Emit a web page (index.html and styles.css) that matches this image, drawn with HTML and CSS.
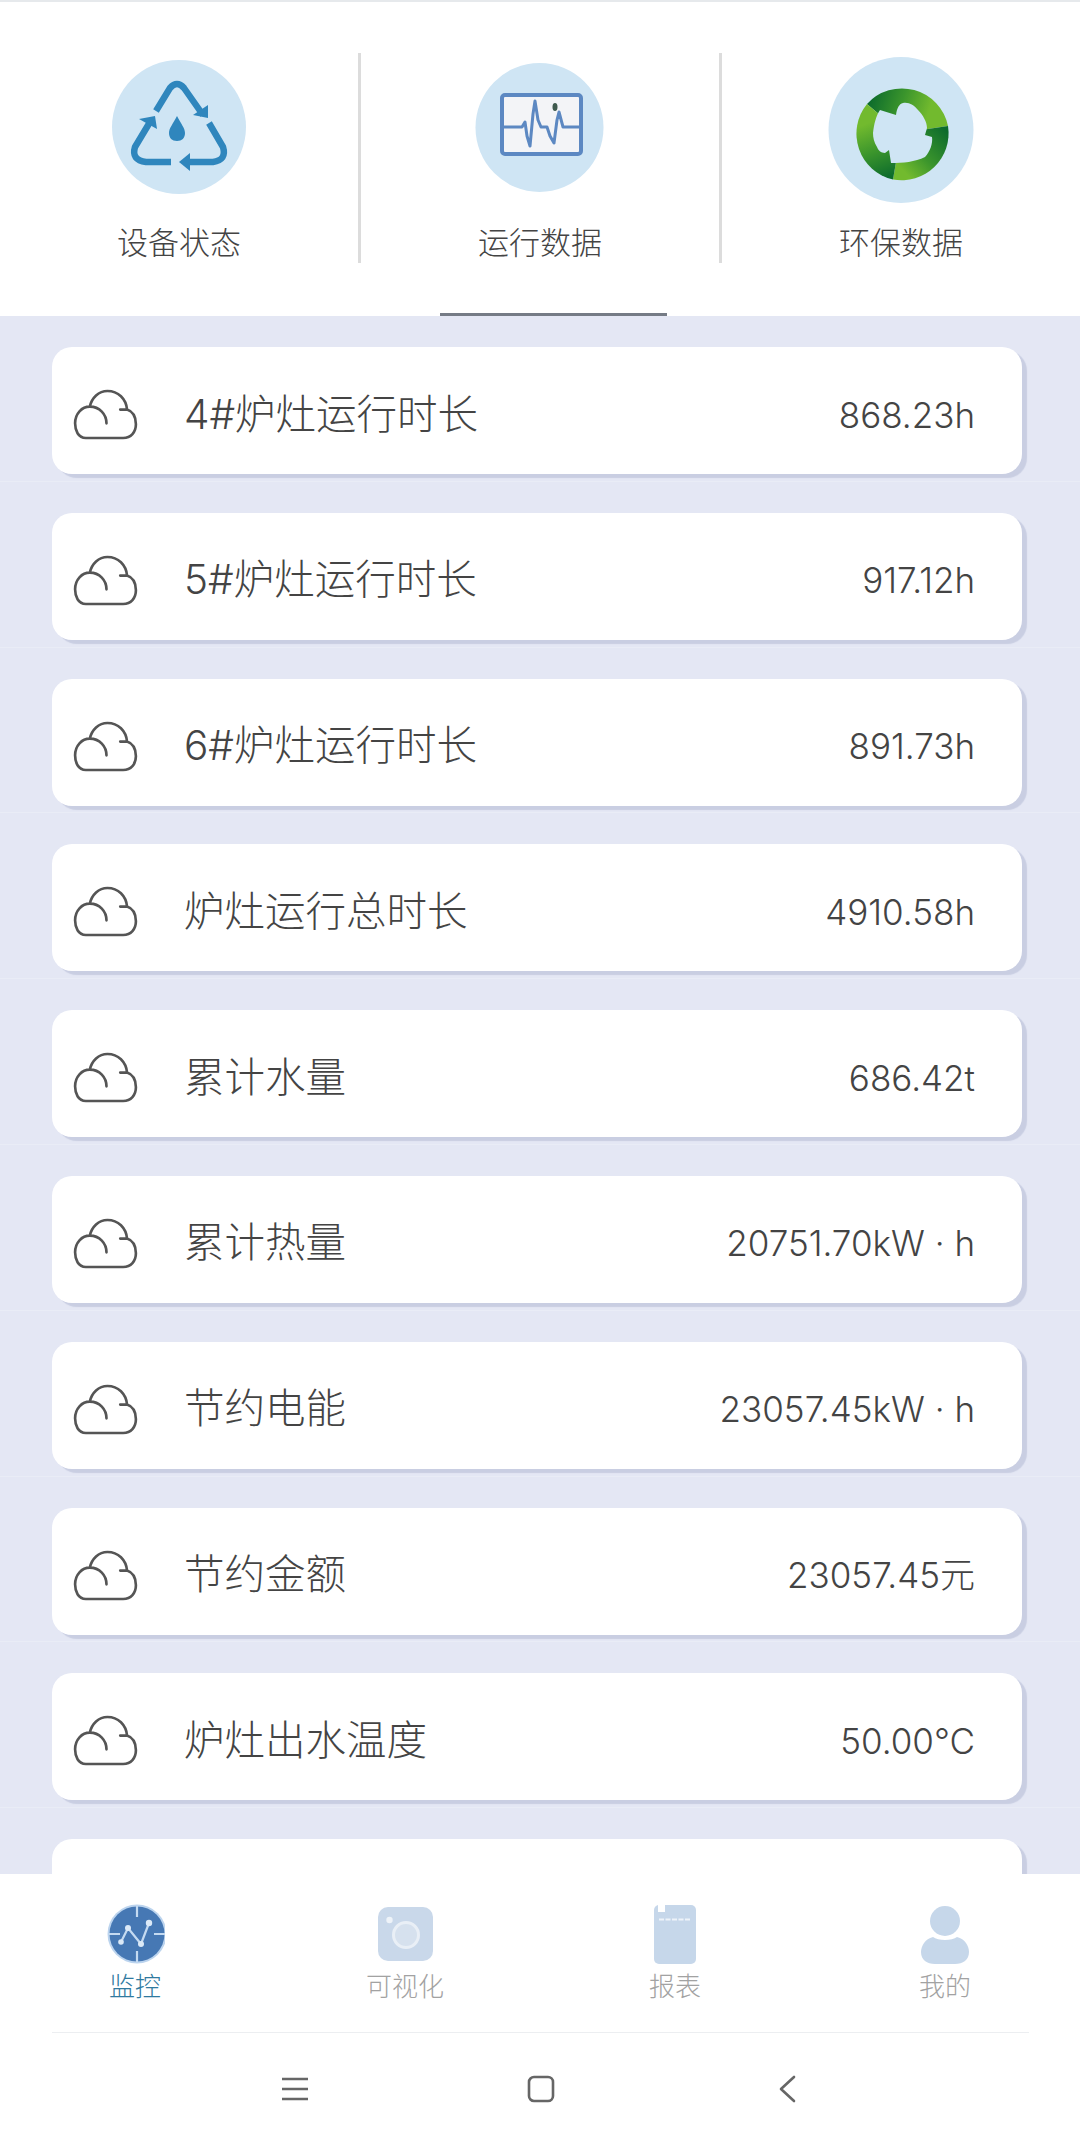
FILE: index.html
```html
<!DOCTYPE html>
<html lang="zh">
<head>
<meta charset="utf-8">
<title>运行数据</title>
<link rel="stylesheet" href="styles.css">
</head>
<body>
<svg class="defs" width="0" height="0" aria-hidden="true">
  <defs>
    <symbol id="cloud" viewBox="-1 -1 66 52">
      <path d="M12 49C4 49 1 41 1 34C1 24 8 17 16 17C26 17 33 25 33 34M16 17C18 8 25 1 34 1C45 1 53 9 54 20L47 20M54 20C60 22 63 28 63 35C63 43 58 49 50 49L12 49" fill="none" stroke="#555" stroke-width="2.7" stroke-linecap="round" stroke-linejoin="round"/>
    </symbol>
    <linearGradient id="gA" gradientUnits="userSpaceOnUse" x1="868" y1="100" x2="945" y2="125"><stop offset="0" stop-color="#0c6b2c"/><stop offset=".4" stop-color="#3b952c"/><stop offset=".75" stop-color="#72ba2e"/></linearGradient>
    <linearGradient id="gB" gradientUnits="userSpaceOnUse" x1="945" y1="130" x2="895" y2="178"><stop offset="0" stop-color="#0c6b2c"/><stop offset=".5" stop-color="#3b952c"/><stop offset=".85" stop-color="#72ba2e"/></linearGradient>
    <linearGradient id="gC" gradientUnits="userSpaceOnUse" x1="892" y1="176" x2="866" y2="108"><stop offset="0" stop-color="#0c6b2c"/><stop offset=".4" stop-color="#3b952c"/><stop offset=".8" stop-color="#72ba2e"/></linearGradient>
  </defs>
</svg>
<div class="app">
  <header class="tabs">
    <div class="tab">
      <svg class="tab-icon" viewBox="104 55 150 150">
        <ellipse cx="179" cy="127" rx="67" ry="67" fill="#cfe5f4"/>
        <g fill="none" stroke="#2f86bd" stroke-width="6.5" stroke-linejoin="round">
          <path d="M156 111L170 88Q177 80 184 88L203 115"/>
          <path d="M171 162L146 162Q131 160 135 147L150 122"/>
          <path d="M209 123L223 147Q227 160 213 162L186 162"/>
        </g>
        <g fill="#2f86bd">
          <path d="M193 115L208 105L208 118Z"/>
          <path d="M139 119L155 116L157 129Z"/>
          <path d="M179 162L190 153L190 171Z"/>
          <path d="M177 116C173 124 169 128 169 133C169 138 172 141 177 141C182 141 185 138 185 133C185 128 181 124 177 116Z"/>
        </g>
      </svg>
      <span class="tab-label">设备状态</span>
    </div>
    <div class="tab tab-active">
      <svg class="tab-icon" viewBox="464 55 150 150">
        <ellipse cx="538.5" cy="127.5" rx="64" ry="64.5" fill="#cfe5f4"/>
        <rect x="501" y="95" width="79" height="59" rx="3" fill="#f3f4f7" stroke="#5c88c2" stroke-width="4"/>
        <path d="M501 127L521 127L524 122L526 136L529 146L532 114L534 101L537 120L540 127L546 127L549 136L553 143L556 120L558 112L562 127L580 127" fill="none" stroke="#5c88c2" stroke-width="3" stroke-linejoin="round"/>
        <ellipse cx="554" cy="107" rx="2.5" ry="4" fill="#3f5a4e"/>
      </svg>
      <span class="tab-label">运行数据</span>
    </div>
    <div class="tab">
      <svg class="tab-icon" viewBox="825 55 150 150">
        <ellipse cx="900" cy="130" rx="72.500" ry="73" fill="#cfe5f4"/>
        <path d="M866 104A47 47 0 0 1 947 126L900 133Z" fill="url(#gA)"/>
        <path d="M947 126A47 47 0 0 1 892 179.500L900 133Z" fill="url(#gB)"/>
        <path d="M892 179.500A47 47 0 0 1 866 104L900 133Z" fill="url(#gC)"/>
        <path d="M895 115C896 108 898 104 902 103C908 102 913 105 917 110C922 115 926 122 926 128L924 135L931 137C932 143 929 152 924 157C914 162 902 163 890 163L888 150L884 153C880 153 877 150 876 147C873 142 872 138 872 133C873 124 875 116 879 110Z" fill="#cfe5f4"/>
      </svg>
      <span class="tab-label">环保数据</span>
    </div>
  </header>

  <main class="list">
    <div class="row"><div class="card"><svg class="cloud"><use href="#cloud"/></svg><span class="name">4#炉灶运行时长</span><span class="value">868.23h</span></div></div>
    <div class="row"><div class="card"><svg class="cloud"><use href="#cloud"/></svg><span class="name">5#炉灶运行时长</span><span class="value">917.12h</span></div></div>
    <div class="row"><div class="card"><svg class="cloud"><use href="#cloud"/></svg><span class="name">6#炉灶运行时长</span><span class="value">891.73h</span></div></div>
    <div class="row"><div class="card"><svg class="cloud"><use href="#cloud"/></svg><span class="name">炉灶运行总时长</span><span class="value">4910.58h</span></div></div>
    <div class="row"><div class="card"><svg class="cloud"><use href="#cloud"/></svg><span class="name">累计水量</span><span class="value">686.42t</span></div></div>
    <div class="row"><div class="card"><svg class="cloud"><use href="#cloud"/></svg><span class="name">累计热量</span><span class="value">20751.70kW · h</span></div></div>
    <div class="row"><div class="card"><svg class="cloud"><use href="#cloud"/></svg><span class="name">节约电能</span><span class="value">23057.45kW · h</span></div></div>
    <div class="row"><div class="card"><svg class="cloud"><use href="#cloud"/></svg><span class="name">节约金额</span><span class="value">23057.45元</span></div></div>
    <div class="row"><div class="card"><svg class="cloud"><use href="#cloud"/></svg><span class="name">炉灶出水温度</span><span class="value">50.00℃</span></div></div>
    <div class="row"><div class="card"></div></div>
  </main>

  <footer class="bottom">
    <nav class="nav">
      <div class="nav-item nav-active">
        <svg class="nav-icon" viewBox="105 1904 60 60">
          <circle cx="137" cy="1934" r="29.500" fill="#bcd4ee"/>
          <circle cx="137" cy="1934" r="27.500" fill="#4678b4"/>
          <g stroke="#c4daf1" stroke-width="2.200" fill="none">
            <path d="M137 1906V1917M137 1951V1962M109 1934H120M154 1934H165"/>
            <path d="M121 1942L128 1928L141 1944L149 1923"/>
          </g>
          <g fill="#dbe9f7">
            <circle cx="121" cy="1942" r="2.800"/>
            <circle cx="128" cy="1928" r="3"/>
            <circle cx="141" cy="1944" r="3"/>
            <circle cx="149" cy="1923" r="3.200"/>
          </g>
        </svg>
        <span class="nav-label">监控</span>
      </div>
      <div class="nav-item">
        <svg class="nav-icon" viewBox="375 1904 60 60">
          <rect x="378" y="1907" width="55" height="54" rx="10" fill="#c9d8ea"/>
          <circle cx="389.500" cy="1920" r="3.200" fill="#eef3f9"/>
          <circle cx="406" cy="1935" r="12.500" fill="#d6e1ee" stroke="#e9eff6" stroke-width="3"/>
        </svg>
        <span class="nav-label">可视化</span>
      </div>
      <div class="nav-item">
        <svg class="nav-icon" viewBox="645 1904 60 60">
          <rect x="654" y="1905" width="42" height="59" rx="5" fill="#c6d7ea"/>
          <rect x="658" y="1904" width="7" height="8" fill="#fff"/>
          <path d="M659 1919.500H691" stroke="#eef3f9" stroke-width="2" stroke-dasharray="5 1.500"/>
        </svg>
        <span class="nav-label">报表</span>
      </div>
      <div class="nav-item">
        <svg class="nav-icon" viewBox="915 1904 60 60">
          <circle cx="945" cy="1921" r="15" fill="#c6d7ea"/>
          <path d="M933 1937C938 1941 952 1941 957 1937C965 1939 969 1946 969 1952C969 1960 963 1964 955 1964H935C927 1964 921 1960 921 1952C921 1946 925 1939 933 1937Z" fill="#c6d7ea"/>
        </svg>
        <span class="nav-label">我的</span>
      </div>
    </nav>
    <div class="sysbar">
      <div class="sys-cell">
        <svg class="sys-icon" width="26" height="24" viewBox="0 0 26 24"><path d="M0 2H26M0 12H26M0 22H26" stroke="#666" stroke-width="2.600"/></svg>
      </div>
      <div class="sys-cell sys-shift">
        <svg class="sys-icon" width="28" height="28" viewBox="0 0 28 28"><rect x="2" y="2" width="24" height="24" rx="5" fill="none" stroke="#666" stroke-width="2.600"/></svg>
      </div>
      <div class="sys-cell sys-shift">
        <svg class="sys-icon" width="18" height="28" viewBox="0 0 18 28"><path d="M16 2L3 14L16 26" fill="none" stroke="#666" stroke-width="2.600" stroke-linecap="round" stroke-linejoin="round"/></svg>
      </div>
    </div>
  </footer>
</div>
</body>
</html>
```
FILE: styles.css
```css
* { box-sizing: border-box; }
html, body { margin: 0; padding: 0; background: #fff; }
body { font-family: Inter, "Noto Sans CJK SC", sans-serif; font-weight: 300; color: #444; }
.defs { position: absolute; }
.app { width: 1080px; height: 2146px; display: flex; flex-direction: column; overflow: hidden; }

.tabs { height: 316px; flex: none; display: flex; align-items: flex-start; background: #fff; border-top: 2px solid #e6e9ec; padding-top: 51px; }
.tab { flex: 1; height: 210px; display: flex; flex-direction: column; align-items: center; position: relative; padding-top: 2px; }
.tab + .tab { border-left: 3px solid #dcdcdc; }
.tab-icon { width: 150px; height: 150px; display: block; flex: none; }
.tab-label { margin-top: 18px; font-size: 31px; line-height: 40px; color: #444; }
.tab-active::after { content: ""; position: absolute; left: 79px; width: 227px; bottom: -53px; height: 3px; background: #757b85; }

.list { flex: 1; min-height: 0; overflow: hidden; background: #e4e7f4; }
.row { height: 165.8px; padding: 31px 58px 0 52px; border-bottom: 1px solid #e9ecf6; }
.card { height: 127px; background: #fff; border-radius: 20px; box-shadow: 5px 4px 1px #c9cee2; display: flex; align-items: center; padding: 8px 47px 0 21px; }
.cloud { width: 65px; height: 51px; flex: none; margin-right: 46px; }
.name { font-size: 40.5px; line-height: 50px; color: #444; flex: 1; }
.value { font-size: 35px; line-height: 50px; color: #444; white-space: nowrap; }

.bottom { flex: none; height: 272px; background: #fff; }
.nav { height: 159px; margin: 0; padding-top: 30px; display: grid; grid-template-columns: repeat(4, 270px); position: relative; }
.nav::after { content: ""; position: absolute; left: 52px; right: 51px; bottom: 0; height: 1px; background: #eceef1; }
.nav-item { display: flex; flex-direction: column; align-items: center; }
.nav-icon { width: 60px; height: 60px; display: block; flex: none; }
.nav-label { margin-top: 8px; font-size: 26px; line-height: 30px; color: #a2a2a2; }
.nav-active .nav-label { color: #2f7a9f; }

.sysbar { display: grid; grid-template-columns: repeat(3, 245.5px); justify-content: center; padding-top: 42px; }
.sys-cell { height: 28px; display: flex; align-items: center; justify-content: center; }
.sys-shift { padding-left: 2px; }
.sys-icon { display: block; }
```
